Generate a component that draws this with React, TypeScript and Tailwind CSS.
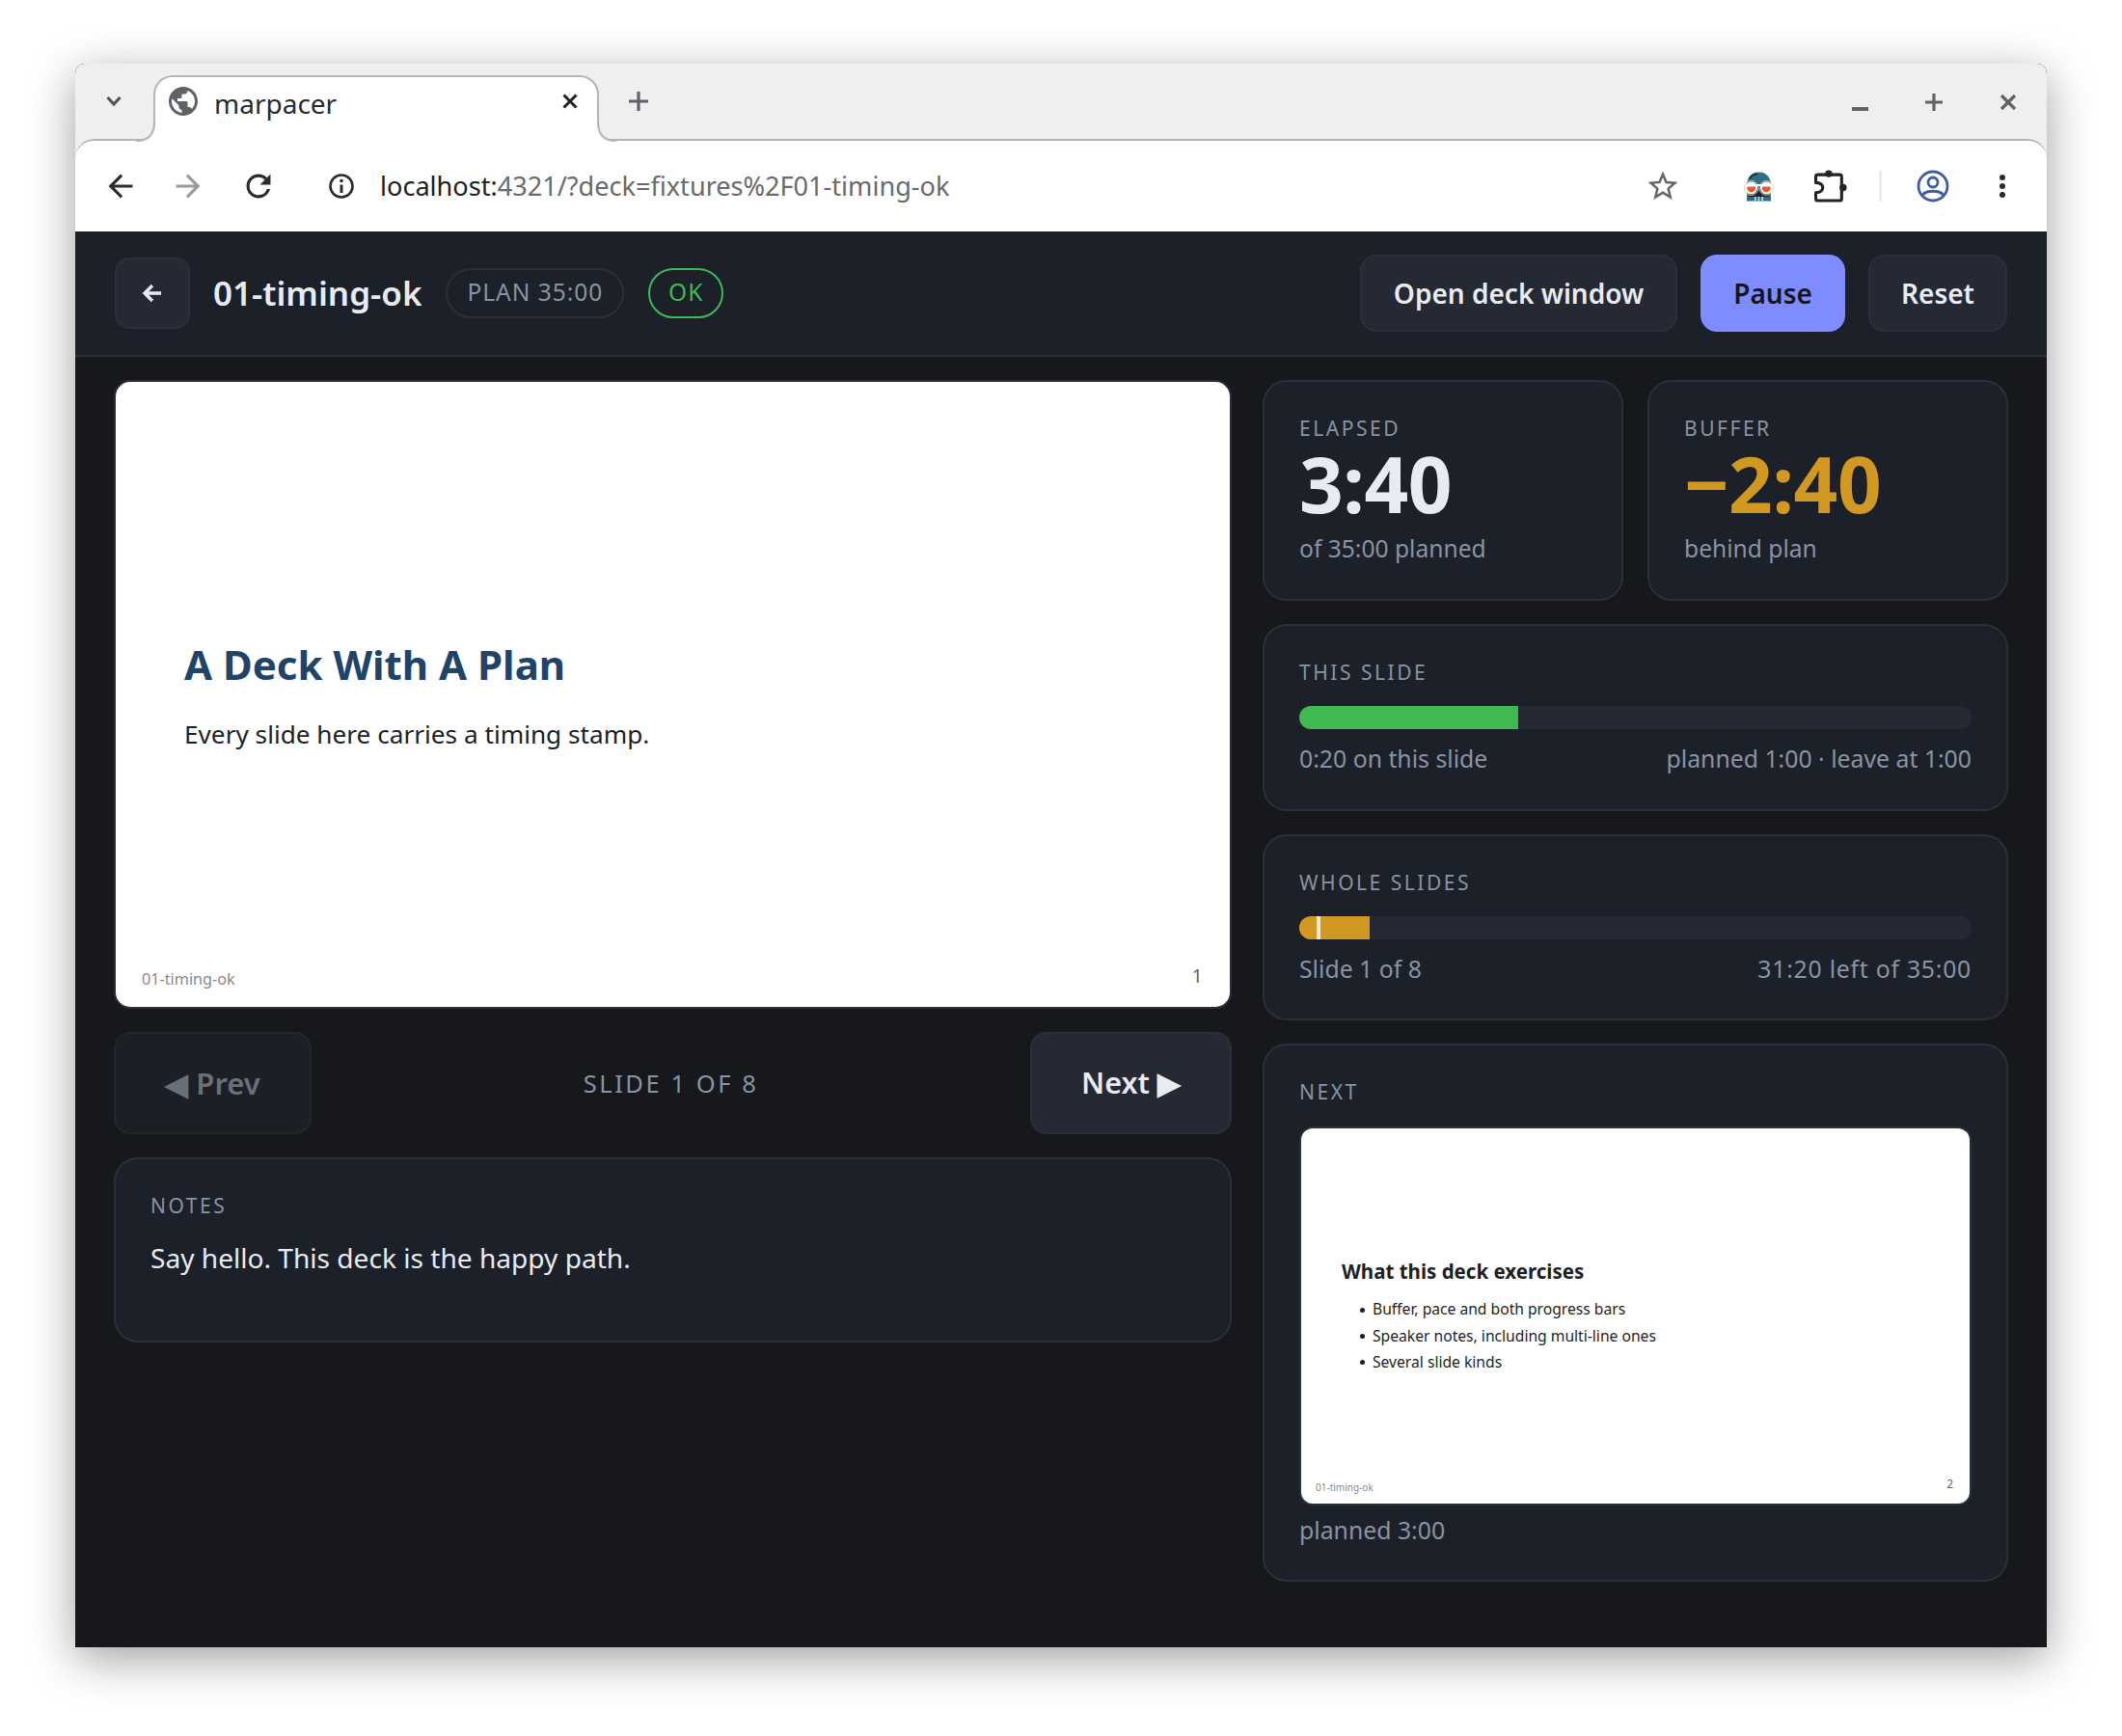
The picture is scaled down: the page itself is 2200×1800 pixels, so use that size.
import React from "react";

const ui = { fontFamily: '"Noto Sans", sans-serif' };

function Label({ children }: { children: React.ReactNode }) {
  return <div className="text-[21px] leading-[30px] tracking-[0.12em] text-[#8a93a3]">{children}</div>;
}

function Card({ className = "", children }: { className?: string; children: React.ReactNode }) {
  return <div className={`rounded-[25px] border-2 border-[#2a2f3a] bg-[#1c2129] px-[36px] ${className}`}>{children}</div>;
}

function Stat({ label, value, sub, color }: { label: string; value: string; sub: string; color: string }) {
  return (
    <Card className={`h-[229px] w-[374px] pt-[33px]`}>
      <Label>{label}</Label>
      <div className={`h-[84px] text-[80px] font-bold leading-[84px] tracking-[-0.005em] ${color}`}>{value}</div>
      <div className="mt-[8px] text-[24.6px] leading-[36px] text-[#8a93a3]">{sub}</div>
    </Card>
  );
}

function Skull() {
  return (
    <svg width="33" height="31" viewBox="0 0 33 31">
      <path d="M4 14 C4.5 5 9 0.5 16.5 0.5 C24 0.5 28.5 5 29 14 Z" fill="#2f7080" />
      <path d="M7 7 C9 4 12 2.5 15 2.5" fill="none" stroke="#10242c" strokeWidth="1.6" />
      <path d="M4 13 H29 L29 30.5 H4 Z" fill="#2f7080" />
      <path d="M5.5 14 H27.5 L27 26 H6 Z" fill="#14222c" />
      <rect x="12" y="26" width="1.6" height="4" fill="#bfe3e8" />
      <rect x="15.7" y="26" width="1.6" height="4" fill="#bfe3e8" />
      <rect x="19.4" y="26" width="1.6" height="4" fill="#bfe3e8" />
      <circle cx="8.7" cy="17" r="7.4" fill="none" stroke="#f6c9ba" strokeWidth="0.9" />
      <circle cx="24.3" cy="17" r="7.4" fill="none" stroke="#f6c9ba" strokeWidth="0.9" />
      <circle cx="8.7" cy="17" r="5.4" fill="#e8592f" stroke="#fff" strokeWidth="2" />
      <circle cx="24.3" cy="17" r="5.4" fill="#e8592f" stroke="#fff" strokeWidth="2" />
      <path d="M14 14 H19" stroke="#fff" strokeWidth="2" />
      <path d="M4 15.5 A5 5 0 0 1 13.4 15.5 Z M19.6 15.5 A5 5 0 0 1 29 15.5 Z" fill="#fff" />
    </svg>
  );
}

export default function App() {
  return (
    <div className="h-[1800px] w-[2200px] overflow-hidden bg-white pl-[78px] pt-[66px]" style={ui}>
      <div className="flex h-[1642px] w-[2044px] flex-col rounded-t-[10px] bg-[#16181c] shadow-[0_12px_48px_rgba(0,0,0,0.38)]">
        {/* title bar */}
        <div className="rounded-t-[10px] bg-[#efefef]">
          <div className="relative flex h-[80px] items-center text-[#5f6368]">
            <svg className="ml-[31px] -mt-[2px]" width="18" height="14" viewBox="0 0 18 14" fill="none" stroke="#555" strokeWidth="3.2">
              <path d="M2.5 3 L9 10 L15.5 3" />
            </svg>
            <div className="relative z-10 ml-[32px] mt-[12px] flex h-[69px] w-[462px] items-start rounded-t-[20px] border-x-2 border-t-2 border-[#b5b5b5] bg-white pl-[14px] pt-[10px]">
              <svg width="30" height="30" viewBox="2 2 20 20">
                <path fill="#5f6368" d="M12 2C6.48 2 2 6.48 2 12s4.48 10 10 10 10-4.48 10-10S17.52 2 12 2zm-1 17.93c-3.95-.49-7-3.85-7-7.93 0-.62.08-1.21.21-1.79L9 15v1c0 1.1.9 2 2 2v1.93zm6.9-2.54c-.26-.81-1-1.39-1.9-1.39h-1v-3c0-.55-.45-1-1-1H8v-2h2c.55 0 1-.45 1-1V7h2c1.1 0 2-.9 2-2v-.41c2.93 1.19 5 4.06 5 7.41 0 2.08-.8 3.97-2.1 5.39z" />
              </svg>
              <span className="-mt-[2px] ml-[17px] text-[28px] leading-[38px] text-[#2a2a2a]">marpacer</span>
              <svg className="absolute right-[19px] top-[16px]" width="18" height="18" viewBox="0 0 18 18" fill="none" stroke="#222" strokeWidth="3">
                <path d="M2.5 2.5 L15.5 15.5 M15.5 2.5 L2.5 15.5" />
              </svg>
              <svg className="absolute -left-[22px] bottom-0" width="22" height="22" viewBox="0 0 22 22">
                <path d="M0 22 H22 V0 C22 14 16 21 2 21 Z" fill="#fff" />
                <path d="M2 21 C16 21 21 14 21 0" fill="none" stroke="#b5b5b5" strokeWidth="2" />
              </svg>
              <svg className="absolute -right-[22px] bottom-0" width="22" height="22" viewBox="0 0 22 22">
                <path d="M22 22 H0 V0 C0 14 6 21 20 21 Z" fill="#fff" />
                <path d="M20 21 C6 21 1 14 1 0" fill="none" stroke="#b5b5b5" strokeWidth="2" />
              </svg>
            </div>
            <svg className="ml-[30px] -mt-[2px]" width="22" height="22" viewBox="0 0 22 22" stroke="#5f6368" strokeWidth="3.2">
              <path d="M11 1 V21 M1 11 H21" />
            </svg>
            <div className="ml-auto mr-[31px] flex items-center gap-[59px]">
              <div className="mt-[14px] h-[3.5px] w-[17px] bg-[#5f6368]" />
              <svg width="18" height="18" viewBox="0 0 18 18" stroke="#5f6368" strokeWidth="3.2"><path d="M9 0 V18 M0 9 H18" /></svg>
              <svg width="18" height="18" viewBox="0 0 18 18" stroke="#5f6368" strokeWidth="3.2"><path d="M2 2 L16 16 M16 2 L2 16" /></svg>
            </div>
          </div>
          {/* toolbar */}
          <div className="relative -mt-[2px] flex h-[96px] items-center rounded-t-[20px] border-t-2 border-[#b5b5b5] bg-white text-[#202124]">
            <div className="ml-[33px] flex items-center gap-[42px]">
              <svg width="28" height="28" viewBox="3 3 18 18"><path fill="#2b2b2b" d="M20 11H7.83l5.59-5.59L12 4l-8 8 8 8 1.41-1.41L7.83 13H20v-2z" /></svg>
              <svg width="28" height="28" viewBox="3 3 18 18"><path fill="#9a9a9a" d="M4 11h12.17l-5.59-5.59L12 4l8 8-8 8-1.41-1.41L16.17 13H4v-2z" /></svg>
              <svg className="ml-[3px]" width="28" height="28" viewBox="3 3 18 18"><path fill="#2b2b2b" d="M17.65 6.35A7.958 7.958 0 0 0 12 4c-4.42 0-7.99 3.58-7.99 8s3.57 8 7.99 8c3.73 0 6.84-2.55 7.73-6h-2.08A5.99 5.99 0 0 1 12 18c-3.31 0-6-2.69-6-6s2.69-6 6-6c1.66 0 3.14.69 4.22 1.78L13 11h7V4l-2.35 2.35z" /></svg>
            </div>
            <svg className="ml-[58px]" width="28" height="28" viewBox="0 0 28 28" fill="none" stroke="#2b2b2b" strokeWidth="2.6">
              <circle cx="14" cy="14" r="11.5" />
              <path d="M14 12.5 V21" strokeWidth="3" />
              <circle cx="14" cy="8.5" r="1.8" fill="#2b2b2b" stroke="none" />
            </svg>
            <div className="ml-[26px] text-[27.1px] leading-[36px] text-[#6a6a6a]">
              <span className="text-[#202124]">localhost:</span>4321/?deck=fixtures%2F01-timing-ok
            </div>
            <div className="ml-auto mr-[42px] flex items-center">
              <svg width="34" height="34" viewBox="1 1 22 22"><path fill="#666" d="M22 9.24l-7.19-.62L12 2 9.19 8.63 2 9.24l5.46 4.73L5.82 21 12 17.27 18.18 21l-1.63-7.03L22 9.24zM12 15.4l-3.76 2.27 1-4.28-3.32-2.88 4.38-.38L12 6.1l1.71 4.04 4.38.38-3.32 2.88 1 4.28L12 15.4z" /></svg>
              <div className="ml-[66px]"><Skull /></div>
              <svg className="ml-[40px]" width="36" height="34" viewBox="0 0 34 33" fill="none" stroke="#222" strokeWidth="3" strokeLinejoin="round">
                <path d="M4 5 H26 A2 2 0 0 1 28 7 V29 A2 2 0 0 1 26 31 H4 A2 2 0 0 1 2 29 V23 C7 23 9 20.5 9 18 C9 15.5 7 13 2 13 V7 A2 2 0 0 1 4 5 Z" />
                <circle cx="15" cy="4" r="3.6" fill="#222" stroke="none" />
                <circle cx="29.5" cy="18" r="3.6" fill="#222" stroke="none" />
              </svg>
              <div className="ml-[32px] h-[32px] w-[3px] bg-[#ececec]" />
              <svg className="ml-[36px]" width="34" height="34" viewBox="0 0 34 34" fill="none" stroke="#3f5da6" strokeWidth="2.8">
                <circle cx="17" cy="17" r="15" />
                <circle cx="17" cy="13" r="5" />
                <path d="M6 26 C11 21 23 21 28 26" />
              </svg>
              <svg className="ml-[51px]" width="8" height="26" viewBox="0 0 8 26" fill="#2b2b2b">
                <circle cx="4" cy="4" r="3" /><circle cx="4" cy="13" r="3" /><circle cx="4" cy="22" r="3" />
              </svg>
            </div>
          </div>
        </div>
        {/* app header */}
        <div className="flex h-[130px] shrink-0 items-center border-b-2 border-[#2a2f3a] bg-[#1c2129] pl-[41px] pr-[41px]">
          <div className="flex h-[74px] w-[78px] items-center justify-center rounded-[15px] border-2 border-[#2a2f3a] bg-[#252934]">
            <svg width="24" height="24" viewBox="0 0 24 24" fill="none" stroke="#e8ebf2" strokeWidth="3.4"><path d="M21 12 H4 M12 4 L4 12 L12 20" /></svg>
          </div>
          <div className="ml-[24px] -mt-[1px] text-[35px] font-semibold leading-[44px] text-[#e8ebf2]">01-timing-ok</div>
          <div className="ml-[25px] -mt-[1px] flex h-[52px] items-center rounded-full border-2 border-[#2a2f3a] px-[20px] text-[24.5px] tracking-[0.04em] text-[#8a93a3]">PLAN 35:00</div>
          <div className="ml-[25px] -mt-[1px] flex h-[52px] w-[78px] items-center justify-center rounded-full border-2 border-[#3fb950] text-[24.5px] tracking-[0.04em] text-[#3fb950]">OK</div>
          <div className="ml-auto flex items-center gap-[24px] text-[28px] font-semibold leading-[40px]">
            <div className="flex h-[80px] w-[329px] items-center justify-center rounded-[17px] border-2 border-[#2a2f3a] bg-[#252934] text-[#e8ebf2]">Open deck window</div>
            <div className="flex h-[80px] w-[150px] items-center justify-center rounded-[17px] bg-[#7f8cff] text-[#14161a]">Pause</div>
            <div className="flex h-[80px] w-[144px] items-center justify-center rounded-[17px] border-2 border-[#2a2f3a] bg-[#252934] text-[#e8ebf2]">Reset</div>
          </div>
        </div>
        {/* main */}
        <div className="flex gap-[32px] pl-[40px] pr-[40px] pt-[24px]">
          <div className="flex w-[1159px] flex-col">
            <div className="relative flex h-[652px] flex-col justify-center rounded-[17px] border-2 border-[#2a2f3a] bg-white pl-[71px]">
              <div className="text-[42px] font-bold leading-[56px] text-[#1f4468]">A Deck With A Plan</div>
              <div className="mt-[25px] text-[26.2px] leading-[38px] text-[#1d1f24]">Every slide here carries a timing stamp.</div>
              <div className="absolute bottom-[17px] left-[27px] text-[16.2px] leading-[24px] text-[#8a8a8a]">01-timing-ok</div>
              <div className="absolute bottom-[18px] right-[28px] text-[20px] leading-[28px] text-[#666]">1</div>
            </div>
            <div className="mt-[24px] flex h-[106px] items-center justify-between">
              <div className="flex h-[106px] w-[205px] items-center justify-center rounded-[17px] border-2 border-[#23262e] bg-[#1c1f26] text-[31px] font-semibold text-[#6b7078]">◀ Prev</div>
              <div className="text-[25.5px] tracking-[0.1em] text-[#8a93a3]">SLIDE 1 OF 8</div>
              <div className="flex h-[106px] w-[209px] items-center justify-center rounded-[17px] border-2 border-[#2a2f3a] bg-[#252934] text-[30.5px] font-semibold text-[#e8ebf2]">Next ▶</div>
            </div>
            <Card className="mt-[24px] h-[192px] !px-[36px] pt-[33px]">
              <Label>NOTES</Label>
              <div className="mt-[19px] text-[28.1px] leading-[40px] text-[#e8ebf2]">Say hello. This deck is the happy path.</div>
            </Card>
          </div>
          <div className="flex w-[773px] flex-col gap-[24px]">
            <div className="flex justify-between">
              <Stat label="ELAPSED" value="3:40" sub="of 35:00 planned" color="text-[#e8ebf2]" />
              <Stat label="BUFFER" value="−2:40" sub="behind plan" color="text-[#d29922]" />
            </div>
            <Card className="h-[194px] pt-[33px]">
              <Label>THIS SLIDE</Label>
              <div className="mt-[20px] h-[24px] overflow-hidden rounded-full bg-[#252934]">
                <div className="h-full w-[32.6%] bg-[#3fb950]" />
              </div>
              <div className="mt-[12px] flex justify-between text-[24.8px] leading-[36px] text-[#8a93a3]">
                <span>0:20 on this slide</span>
                <span>planned 1:00 · leave at 1:00</span>
              </div>
            </Card>
            <Card className="h-[193px] pt-[33px]">
              <Label>WHOLE SLIDES</Label>
              <div className="relative mt-[20px] h-[24px] overflow-hidden rounded-full bg-[#252934]">
                <div className="h-full w-[73px] bg-[#d29922]" />
                <div className="absolute left-[18px] top-0 h-full w-[4px] bg-[#f3e9d2]" />
              </div>
              <div className="mt-[12px] flex justify-between text-[24.8px] leading-[36px] text-[#8a93a3]">
                <span>Slide 1 of 8</span>
                <span className="tracking-[0.03em]">31:20 left of 35:00</span>
              </div>
            </Card>
            <Card className="h-[558px] pt-[33px]">
              <Label>NEXT</Label>
              <div className="relative mt-[21px] flex h-[393px] flex-col justify-center rounded-[14px] border-2 border-[#2a2f3a] bg-white pl-[42px] pt-[2px]">
                <div className="text-[20.5px] font-bold leading-[28px] text-[#1d1f24]">What this deck exercises</div>
                <ul className="mt-[12px] text-[15.65px] leading-[27.4px] text-[#1d1f24]">
                  <li className="flex items-center"><span className="ml-[19px] mr-[8px] h-[5px] w-[5px] rounded-full bg-[#1d1f24]" />Buffer, pace and both progress bars</li>
                  <li className="flex items-center"><span className="ml-[19px] mr-[8px] h-[5px] w-[5px] rounded-full bg-[#1d1f24]" />Speaker notes, including multi-line ones</li>
                  <li className="flex items-center"><span className="ml-[19px] mr-[8px] h-[5px] w-[5px] rounded-full bg-[#1d1f24]" />Several slide kinds</li>
                </ul>
                <div className="absolute bottom-[10px] left-[15px] text-[10px] leading-[14px] text-[#8a8a8a]">01-timing-ok</div>
                <div className="absolute bottom-[12px] right-[17px] text-[12px] leading-[16px] text-[#666]">2</div>
              </div>
              <div className="mt-[7px] text-[24.8px] leading-[36px] text-[#8a93a3]">planned 3:00</div>
            </Card>
          </div>
        </div>
      </div>
    </div>
  );
}
